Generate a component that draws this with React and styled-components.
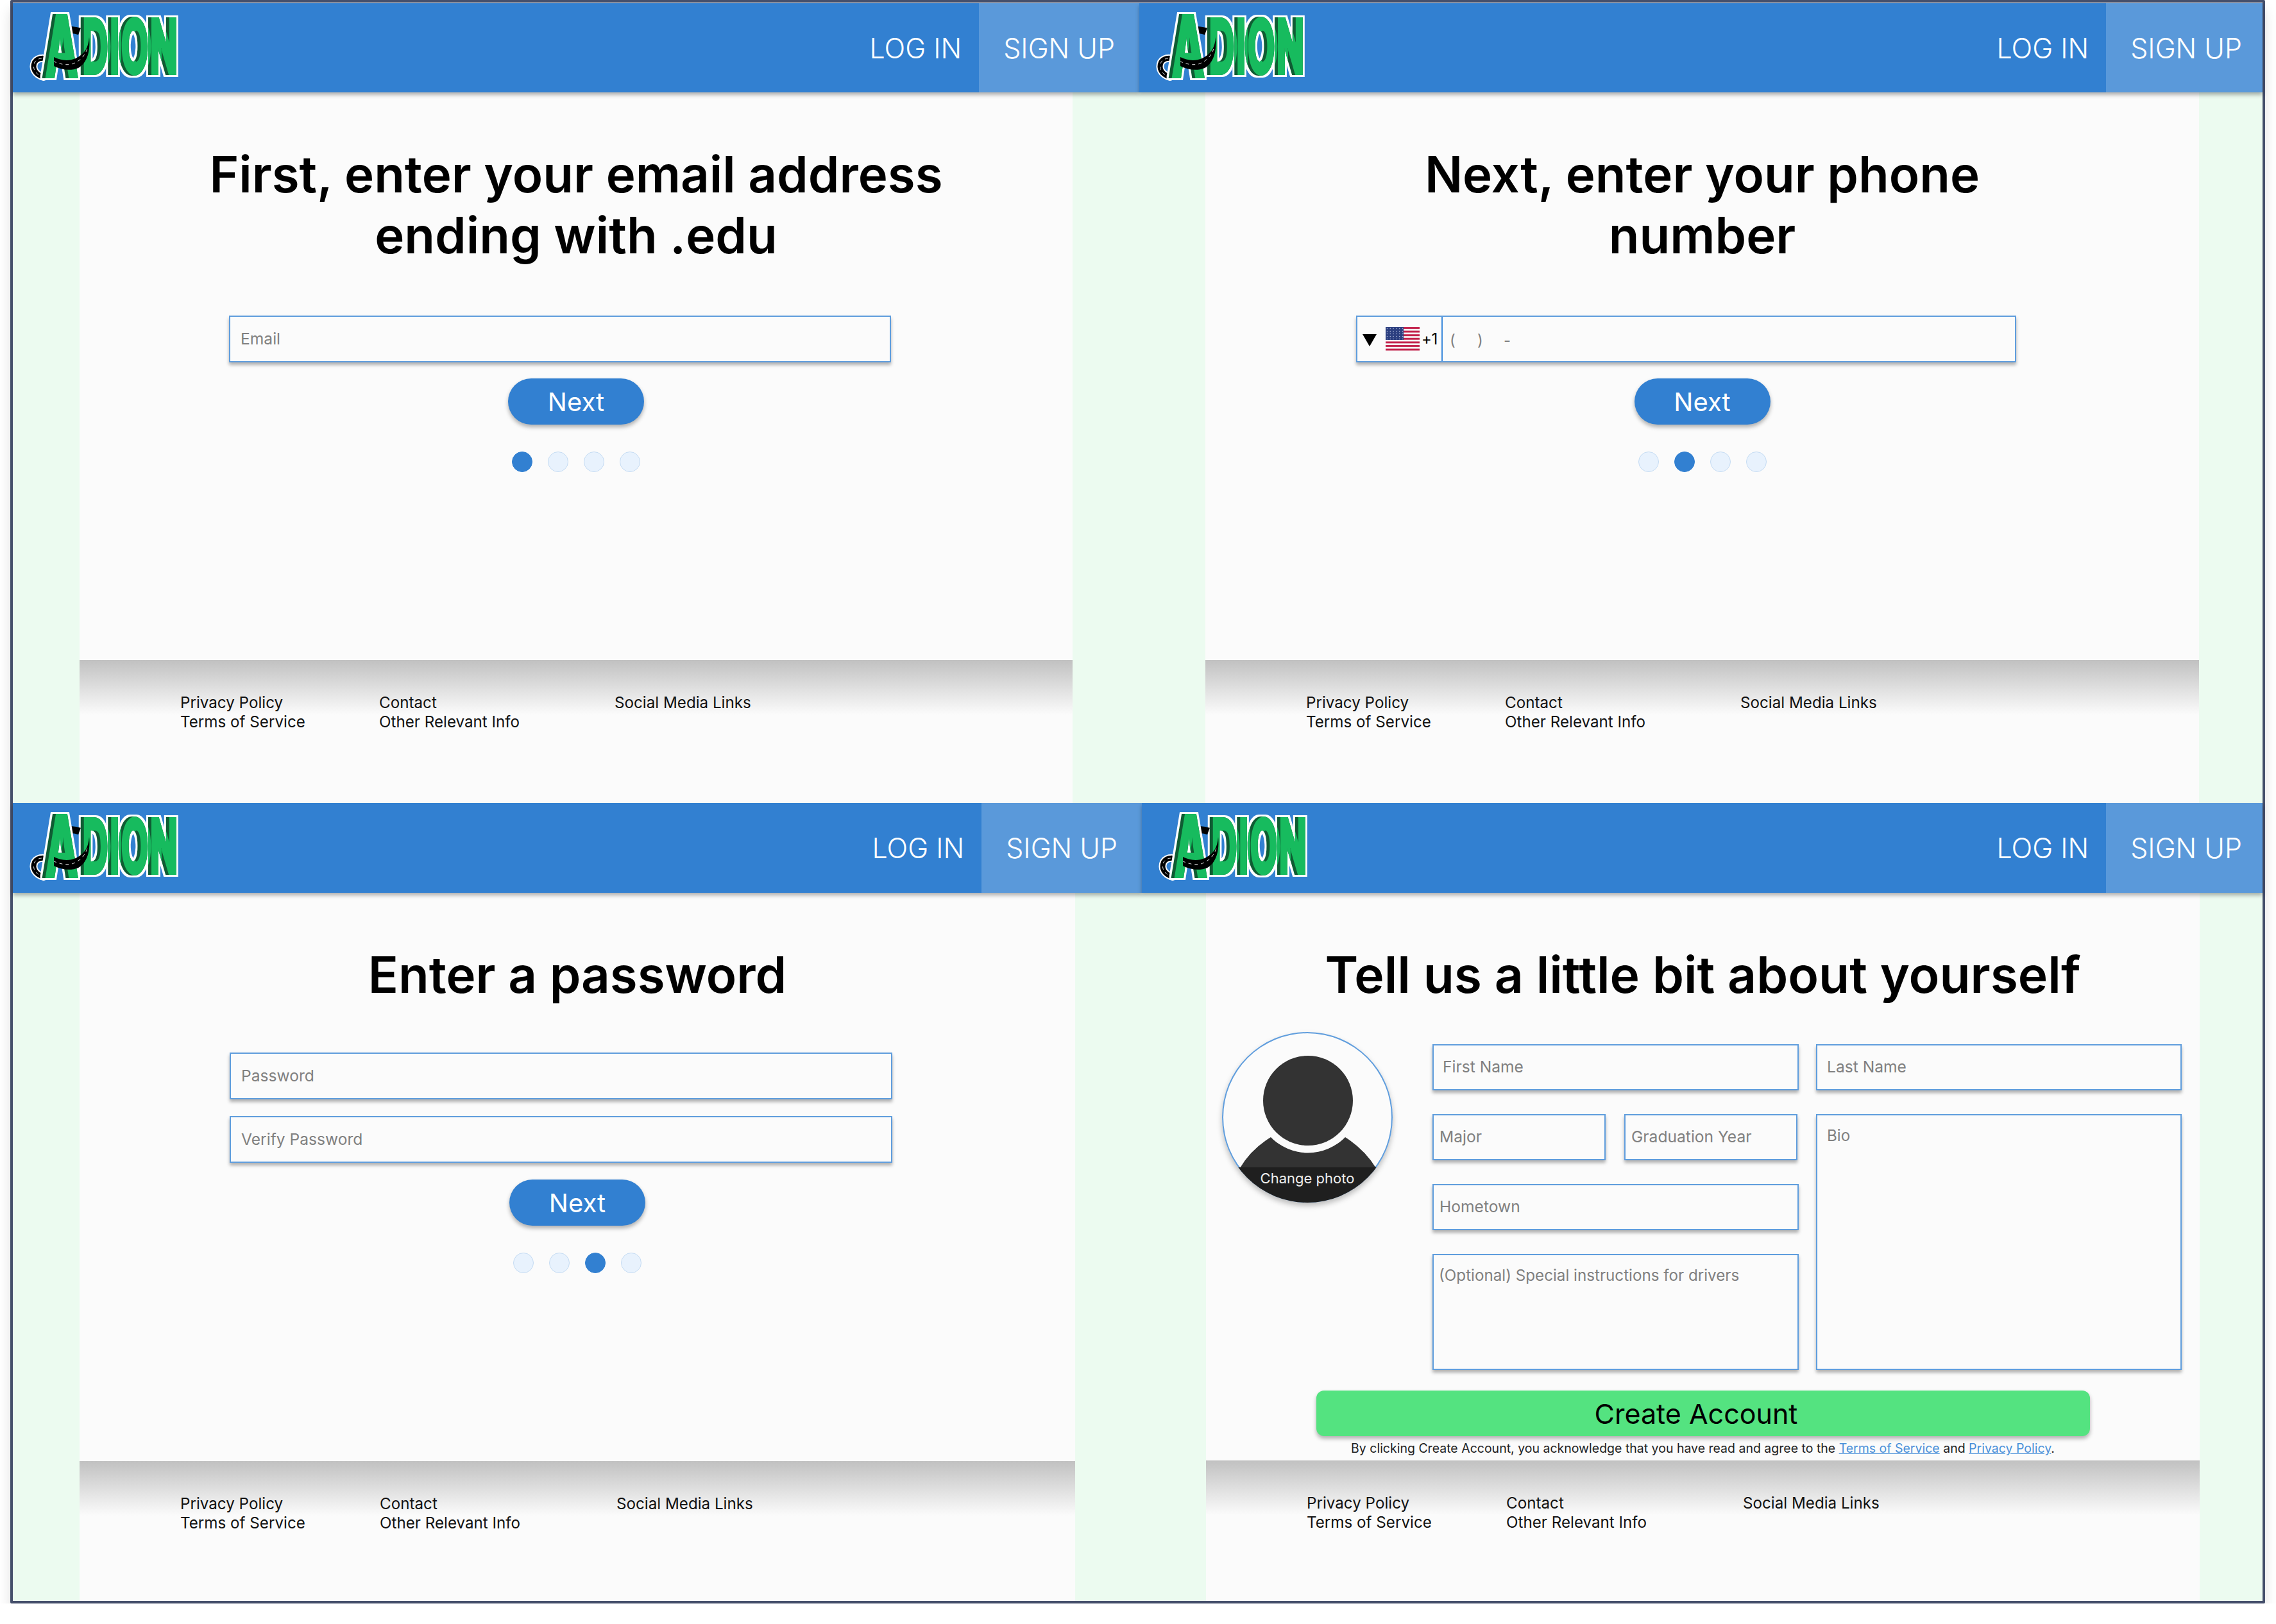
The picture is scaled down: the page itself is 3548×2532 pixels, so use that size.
import React from 'react';
import styled, { createGlobalStyle } from 'styled-components';

const blue = '#3280d1';
const line = '#5f9ddd';
const mint = '#ecfbf0';
const paper = '#fbfbfb';

const Global = createGlobalStyle`
  html, body { margin: 0; background: #fff; }
  body { font-family: Inter, "Noto Sans", sans-serif; color: #000; }
  * { box-sizing: border-box; }
`;

const Frame = styled.div`
  width: 3515px;
  height: 2500px;
  margin-left: 16px;
  padding-top: 1px;
  border: 4px solid #454f6b;
  border-radius: 2px;
  background: #fff;
  box-shadow: 0 16px 20px rgba(0, 0, 0, 0.12);
  display: grid;
  grid-template-rows: 1247px 1244px;
`;

const Row = styled.div`
  display: grid;
  grid-template-columns: ${(p) => p.$columns};
  min-height: 0;
`;

const Panel = styled.section`
  background: ${mint};
  display: flex;
  flex-direction: column;
  min-height: 0;
  min-width: 0;
`;

const Header = styled.header`
  position: relative;
  z-index: 2;
  flex: 0 0 ${(p) => p.$height || 139}px;
  display: flex;
  align-items: stretch;
  background: ${blue};
  box-shadow: 0 4px 6px rgba(0, 0, 0, 0.3);
`;

const LogoBox = styled.div`
  margin: 17px auto 0 28px;
`;

const LogoArt = styled.svg`
  display: block;
  overflow: visible;
`;

const LogIn = styled.a`
  display: flex;
  align-items: center;
  padding-right: 27px;
  color: #fff;
  font-size: 43px;
  font-weight: 300;
`;

const SignUp = styled(LogIn)`
  padding: 0 ${(p) => (p.$tight ? 32 : 38)}px 0 38px;
  background: #5a99da;
`;

const Sheet = styled.div`
  flex: 1;
  min-height: 0;
  display: flex;
  flex-direction: column;
  margin: 0 ${(p) => p.$right}px 0 ${(p) => p.$left}px;
  background: ${paper};
`;

const Body = styled.div`
  flex: 1;
  min-height: 0;
  padding-top: 80px;
  display: flex;
  flex-direction: column;
  align-items: center;
`;

const Title = styled.h1`
  margin: 0 0 1px;
  width: 1300px;
  font-size: ${(p) => p.$size || 78}px;
  line-height: 95px;
  font-weight: 600;
  text-align: center;
`;

const Field = styled.input`
  display: block;
  width: ${(p) => (p.$width ? `${p.$width}px` : '100%')};
  height: ${(p) => p.$height || 73}px;
  padding: 0 0 2px ${(p) => p.$pad || 16}px;
  border: 2px solid ${line};
  background: ${paper};
  box-shadow: 0 4px 5px rgba(0, 0, 0, 0.3);
  font: 400 24.6px Inter, sans-serif;
  &::placeholder { color: #808080; opacity: 1; }
`;

const Area = styled.textarea`
  display: block;
  width: 100%;
  height: ${(p) => p.$height}px;
  padding: 17px 0 0 ${(p) => p.$pad}px;
  border: 2px solid ${line};
  background: ${paper};
  box-shadow: 0 4px 5px rgba(0, 0, 0, 0.3);
  font: 400 24.2px Inter, sans-serif;
  resize: none;
  &::placeholder { color: #808080; opacity: 1; }
`;

const FieldStack = styled.div`
  align-self: flex-start;
  margin: ${(p) => p.$top}px 0 0 ${(p) => p.$left}px;
  display: flex;
  flex-direction: column;
  gap: 26px;
`;

const PhoneBox = styled.div`
  align-self: flex-start;
  margin: 77px 0 0 235px;
  width: 1029px;
  height: 73px;
  display: flex;
  border: 2px solid ${line};
  background: ${paper};
  box-shadow: 0 4px 5px rgba(0, 0, 0, 0.3);
`;

const CountryPicker = styled.div`
  flex: 0 0 133px;
  display: flex;
  align-items: center;
  padding-left: 8px;
  border-right: 2px solid #3f8bdc;
  font-size: 24px;
`;

const Caret = styled.span`
  width: 0;
  height: 0;
  margin: 3px 14px 0 0;
  border-left: 11px solid transparent;
  border-right: 11px solid transparent;
  border-top: 19px solid #000;
`;

const CountryCode = styled.span`
  margin-left: 3px;
  letter-spacing: -0.5px;
`;

const PhoneMask = styled.div`
  display: flex;
  align-items: center;
  padding: 3px 0 0 11px;
  color: #808080;
  font-size: 24px;
`;

const MaskPart = styled.span`
  width: ${(p) => p.$width}px;
`;

const NextButton = styled.button`
  width: 212px;
  height: 72px;
  margin-top: ${(p) => p.$top || 25}px;
  border: 0;
  border-radius: 36px;
  background: ${blue};
  color: #fff;
  font: 400 40px Inter, sans-serif;
  box-shadow: 0 4px 6px rgba(0, 0, 0, 0.3);
`;

const Dots = styled.div`
  margin-top: 42px;
  display: flex;
  gap: 24px;
`;

const Dot = styled.span`
  width: 32px;
  height: 32px;
  border-radius: 50%;
  background: ${(p) => (p.$on ? blue : '#e8f2fd')};
  border: 1px solid ${(p) => (p.$on ? blue : '#c5dcf3')};
`;

const FormRow = styled.div`
  align-self: stretch;
  display: flex;
  align-items: flex-start;
  padding-left: 25px;
`;

const Avatar = styled.div`
  position: relative;
  flex: 0 0 266px;
  height: 266px;
  margin: 41px 62px 0 0;
  border-radius: 50%;
  overflow: hidden;
  background: ${paper};
  box-shadow: 0 5px 8px rgba(0, 0, 0, 0.25), inset 0 0 0 2px ${line};
`;

const AvatarBand = styled.div`
  position: absolute;
  left: 0;
  right: 0;
  bottom: 0;
  height: 55px;
  padding-top: 0;
  background: #1f1f1f;
  color: #eee;
  font-size: 22px;
  line-height: 34px;
  text-align: center;
`;

const Fields = styled.div`
  flex: 0 0 1168px;
  margin-top: 60px;
  display: grid;
  grid-template-columns: 571px 570px;
  column-gap: 27px;
`;

const FieldCol = styled.div`
  display: flex;
  flex-direction: column;
  gap: 37px;
`;

const Pair = styled.div`
  display: grid;
  grid-template-columns: 270px 270px;
  column-gap: 29px;
`;

const CreateButton = styled.button`
  align-self: flex-start;
  width: 1206px;
  height: 71px;
  margin: 32px 0 0 172px;
  padding: 0 22px 0 0;
  border: 0;
  border-radius: 12px;
  background: #54e380;
  color: #000;
  font: 400 43px Inter, sans-serif;
  box-shadow: 0 4px 6px rgba(0, 0, 0, 0.3);
`;

const Legal = styled.p`
  margin: 7px 0 0;
  font-size: 19.5px;
  line-height: 24px;
  color: #222;
  white-space: nowrap;
`;

const LegalLink = styled.a`
  color: #4a90d9;
  text-decoration: underline;
`;

const Footer = styled.footer`
  flex: 0 0 ${(p) => p.$height || 223}px;
  padding: 52px 0 0 157px;
  display: grid;
  grid-template-columns: ${(p) => (p.$wide ? '311px 369px' : '310px 367px')} 1fr;
  align-content: start;
  background: linear-gradient(#c1c1c1, ${paper} 85px);
  font-size: 24.2px;
  line-height: 30px;
  color: #111;
`;

const FooterCol = styled.div`
  display: flex;
  flex-direction: column;
`;

function Logo() {
  const road = 'M36 74 C26 68 12 66 6 75 C2 84 6 94 20 98';
  const sweepLine = 'M88 54 C84 66 76 74 64 78 C54 80 46 78 36 74';
  const sweep = 'M91 36 C90 52 84 62 70 69 C58 74 46 72 36 67 L36 81 C48 87 62 89 74 84 C88 76 93 58 91 36 Z';
  const type = { fontFamily: 'Inter, sans-serif', fontWeight: 900 };
  return (
    <LogoArt width="232" height="106" viewBox="0 0 232 106">
      <defs>
        <filter id="logoInk" x="-15%" y="-15%" width="130%" height="130%" colorInterpolationFilters="sRGB">
          <feMorphology in="SourceAlpha" operator="dilate" radius="1.5 0" result="fat" />
          <feMorphology in="fat" operator="dilate" radius="2.5" result="edge" />
          <feFlood floodColor="#ffffff" />
          <feComposite in2="edge" operator="in" result="outline" />
          <feFlood floodColor="#0f5c33" />
          <feComposite in2="fat" operator="in" result="dark" />
          <feOffset in="fat" dx="5" result="moved" />
          <feComposite in="moved" in2="fat" operator="in" result="inner" />
          <feFlood floodColor="#17bb5e" />
          <feComposite in2="inner" operator="in" result="bright" />
          <feMerge>
            <feMergeNode in="outline" />
            <feMergeNode in="dark" />
            <feMergeNode in="bright" />
          </feMerge>
        </filter>
      </defs>
      <g filter="url(#logoInk)">
        <text {...type} fontSize="124" transform="translate(77 95) scale(0.475 1)">DION</text>
      </g>
      <path d="M54 27 C60 24 68 24 76 27" fill="none" stroke="#000" strokeWidth="11" />
      <path d={road} fill="none" stroke="#fff" strokeWidth="12" strokeLinecap="round" />
      <path d={road} fill="none" stroke="#000" strokeWidth="8" strokeLinecap="round" />
      <path d={road} fill="none" stroke="#ddd" strokeWidth="1" strokeDasharray="5 5" />
      <g filter="url(#logoInk)">
        <text {...type} fontSize="137" transform="translate(18 100) scale(0.51 1)">A</text>
      </g>
      <path d={sweep} fill="#000" />
      <path d={sweepLine} fill="none" stroke="#ddd" strokeWidth="1" strokeDasharray="5 5" />
    </LogoArt>
  );
}

function Flag() {
  const stripes = [0, 1, 2, 3, 4, 5, 6];
  const stars = [];
  for (let y = 0; y < 5; y++) {
    for (let x = 0; x < 6; x++) stars.push([2.5 + x * 4.8, 2.5 + y * 4]);
  }
  return (
    <svg width="53" height="38" viewBox="0 0 53 38">
      <rect width="53" height="38" fill="#f6f0f2" />
      {stripes.map((i) => (
        <rect key={i} y={i * 5.6} width="53" height="2.9" fill="#c3234d" />
      ))}
      <rect width="28" height="20" fill="#2c3f80" />
      {stars.map(([x, y]) => (
        <circle key={`${x}-${y}`} cx={x} cy={y} r="0.8" fill="#aab4d6" />
      ))}
    </svg>
  );
}

function Top({ height, tight }) {
  return (
    <Header $height={height}>
      <LogoBox><Logo /></LogoBox>
      <LogIn>LOG IN</LogIn>
      <SignUp $tight={tight}>SIGN UP</SignUp>
    </Header>
  );
}

function Bottom({ height, wide }) {
  return (
    <Footer $height={height} $wide={wide}>
      <FooterCol><span>Privacy Policy</span><span>Terms of Service</span></FooterCol>
      <FooterCol><span>Contact</span><span>Other Relevant Info</span></FooterCol>
      <FooterCol><span>Social Media Links</span></FooterCol>
    </Footer>
  );
}

function Progress({ step }) {
  return (
    <Dots>
      {[0, 1, 2, 3].map((i) => <Dot key={i} $on={i === step} />)}
    </Dots>
  );
}

function EmailPanel() {
  return (
    <Panel>
      <Top />
      <Sheet $left={104} $right={104}>
        <Body>
          <Title>First, enter your email address<br />ending with .edu</Title>
          <FieldStack $top={77} $left={233}>
            <Field $width={1032} placeholder="Email" />
          </FieldStack>
          <NextButton>Next</NextButton>
          <Progress step={0} />
        </Body>
        <Bottom />
      </Sheet>
    </Panel>
  );
}

function PhonePanel() {
  return (
    <Panel>
      <Top tight />
      <Sheet $left={103} $right={99}>
        <Body>
          <Title>Next, enter your phone<br />number</Title>
          <PhoneBox>
            <CountryPicker>
              <Caret />
              <Flag />
              <CountryCode>+1</CountryCode>
            </CountryPicker>
            <PhoneMask>
              <MaskPart $width={43}>(</MaskPart>
              <MaskPart $width={41}>)</MaskPart>
              <MaskPart $width={10}>-</MaskPart>
            </PhoneMask>
          </PhoneBox>
          <NextButton>Next</NextButton>
          <Progress step={1} />
        </Body>
        <Bottom />
      </Sheet>
    </Panel>
  );
}

function PasswordPanel() {
  return (
    <Panel>
      <Top height={140} />
      <Sheet $left={104} $right={104}>
        <Body>
          <Title>Enter a password</Title>
          <FieldStack $top={73} $left={234}>
            <Field $width={1033} placeholder="Password" />
            <Field $width={1033} placeholder="Verify Password" />
          </FieldStack>
          <NextButton $top={26}>Next</NextButton>
          <Progress step={2} />
        </Body>
        <Bottom height={218} wide />
      </Sheet>
    </Panel>
  );
}

function ProfilePanel() {
  return (
    <Panel>
      <Top height={140} tight />
      <Sheet $left={100} $right={98}>
        <Body>
          <Title $size={78.6}>Tell us a little bit about yourself</Title>
          <FormRow>
            <Avatar>
              <svg width="266" height="266" viewBox="0 0 266 266">
                <circle cx="134" cy="107" r="70" fill="#333" />
                <path d="M28 212 Q45 183 76 164 A81 81 0 0 0 192 164 Q222 183 240 212 Z" fill="#333" />
              </svg>
              <AvatarBand>Change photo</AvatarBand>
            </Avatar>
            <Fields>
              <FieldCol>
                <Field $height={72} $pad={14} placeholder="First Name" />
                <Pair>
                  <Field $height={72} $pad={9} placeholder="Major" />
                  <Field $height={72} $pad={9} placeholder="Graduation Year" />
                </Pair>
                <Field $height={72} $pad={9} placeholder="Hometown" />
                <Area $height={181} $pad={8} placeholder="(Optional) Special instructions for drivers" />
              </FieldCol>
              <FieldCol>
                <Field $height={72} $pad={15} placeholder="Last Name" />
                <Area $height={399} $pad={15} placeholder="Bio" />
              </FieldCol>
            </Fields>
          </FormRow>
          <CreateButton>Create Account</CreateButton>
          <Legal>
            By clicking Create Account, you acknowledge that you have read and agree to the{' '}
            <LegalLink>Terms of Service</LegalLink> and <LegalLink>Privacy Policy</LegalLink>.
          </Legal>
        </Body>
        <Bottom height={219} wide />
      </Sheet>
    </Panel>
  );
}

export default function App() {
  return (
    <>
      <Global />
      <Frame>
        <Row $columns="1756px 1751px">
          <EmailPanel />
          <PhonePanel />
        </Row>
        <Row $columns="1760px 1747px">
          <PasswordPanel />
          <ProfilePanel />
        </Row>
      </Frame>
    </>
  );
}
